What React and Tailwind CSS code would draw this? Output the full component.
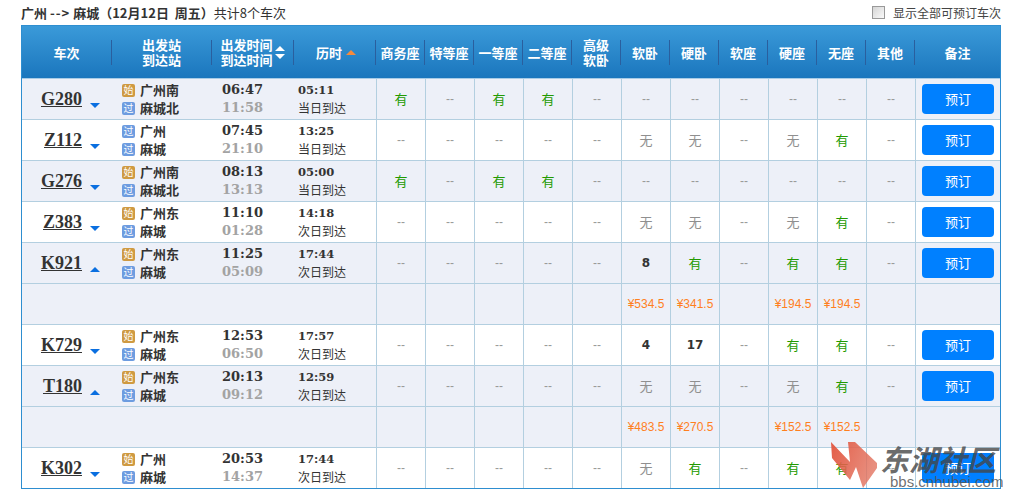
import React from 'react';

const seatHeads = ['商务座', '特等座', '一等座', '二等座', '高级软卧', '软卧', '硬卧', '软座', '硬座', '无座', '其他'];

const cn = '[font-family:"Noto_Sans_CJK_SC",sans-serif]';

const trains = [
  { no: 'G280', up: false, s1: ['始', '广州南'], s2: ['过', '麻城北'], t1: '06:47', t2: '11:58', dur: '05:11', day: '当日到达', seats: ['有', '--', '有', '有', '--', '--', '--', '--', '--', '--', '--'] },
  { no: 'Z112', up: false, s1: ['过', '广州'], s2: ['过', '麻城'], t1: '07:45', t2: '21:10', dur: '13:25', day: '当日到达', seats: ['--', '--', '--', '--', '--', '无', '无', '--', '无', '有', '--'] },
  { no: 'G276', up: false, s1: ['始', '广州南'], s2: ['过', '麻城北'], t1: '08:13', t2: '13:13', dur: '05:00', day: '当日到达', seats: ['有', '--', '有', '有', '--', '--', '--', '--', '--', '--', '--'] },
  { no: 'Z383', up: false, s1: ['始', '广州东'], s2: ['过', '麻城'], t1: '11:10', t2: '01:28', dur: '14:18', day: '次日到达', seats: ['--', '--', '--', '--', '--', '无', '无', '--', '无', '有', '--'] },
  { no: 'K921', up: true, s1: ['始', '广州东'], s2: ['过', '麻城'], t1: '11:25', t2: '05:09', dur: '17:44', day: '次日到达', seats: ['--', '--', '--', '--', '--', '8', '有', '--', '有', '有', '--'], prices: ['', '', '', '', '', '¥534.5', '¥341.5', '', '¥194.5', '¥194.5', ''] },
  { no: 'K729', up: false, s1: ['始', '广州东'], s2: ['过', '麻城'], t1: '12:53', t2: '06:50', dur: '17:57', day: '次日到达', seats: ['--', '--', '--', '--', '--', '4', '17', '--', '有', '有', '--'] },
  { no: 'T180', up: true, s1: ['始', '广州东'], s2: ['过', '麻城'], t1: '20:13', t2: '09:12', dur: '12:59', day: '次日到达', seats: ['--', '--', '--', '--', '--', '无', '无', '--', '无', '有', '--'], prices: ['', '', '', '', '', '¥483.5', '¥270.5', '', '¥152.5', '¥152.5', ''] },
  { no: 'K302', up: false, s1: ['始', '广州'], s2: ['过', '麻城'], t1: '20:53', t2: '14:37', dur: '17:44', day: '次日到达', seats: ['--', '--', '--', '--', '--', '无', '有', '--', '有', '有', '--'] },
];

const Tri = ({ up, color = 'border-[#0a6fe0]', className = '' }) => (
  <span
    className={`inline-block h-0 w-0 border-x-[5px] border-x-transparent ${up ? `border-b-[5px] ${color}` : `border-t-[5px] ${color}`} ${className}`}
  />
);

const Seat = ({ v }) => {
  if (v === '有') return <span className="text-[13px] text-[#229a00]">有</span>;
  if (v === '无') return <span className="text-[13px] text-[#8f8f8f]">无</span>;
  if (v === '--') return <span className="text-[12px] text-[#999] [font-family:'Liberation_Sans',sans-serif]">--</span>;
  return <span className="text-[12px] font-bold text-[#333] [font-family:'DejaVu_Sans',sans-serif]">{v}</span>;
};

const Station = ({ tag, name }) => (
  <div className="flex h-[18px] items-center gap-[5px]">
    <span className={`flex h-[13px] w-[13px] items-center justify-center rounded-[2px] text-[10px] leading-none text-white ${tag === '始' ? 'bg-[#cf9a42]' : 'bg-[#6d9ce0]'}`}>
      {tag}
    </span>
    <span className="text-[13px] font-bold text-[#333]">{name}</span>
  </div>
);

const Row = ({ t, striped }) => (
  <div className={`flex h-[41px] border-b border-[#b3cfe0] last:border-b-[#2e8ed0] ${striped ? 'bg-[#edf0f8]' : 'bg-white'}`}>
    <div className="flex w-[90px] shrink-0 items-center justify-end pr-3">
      <span className="text-[18px] leading-none font-bold text-[#333] underline [font-family:'Liberation_Serif',serif]">{t.no}</span>
      <Tri up={t.up} className="mt-[12px] ml-2" />
    </div>
    <div className="flex w-[99px] shrink-0 flex-col justify-center pl-2.5">
      <Station tag={t.s1[0]} name={t.s1[1]} />
      <Station tag={t.s2[0]} name={t.s2[1]} />
    </div>
    <div className="flex w-[82px] shrink-0 flex-col justify-center pl-[11px] text-[13px] leading-[18px] font-bold [font-family:'DejaVu_Serif',serif]">
      <span className="text-[#333]">{t.t1}</span>
      <span className="text-[#a3a3a3]">{t.t2}</span>
    </div>
    <div className="flex w-[83px] shrink-0 flex-col justify-center pl-[5px] text-[#333]">
      <span className="text-[11.5px] leading-[18px] font-bold [font-family:'DejaVu_Serif',serif]">{t.dur}</span>
      <span className="text-[12px] leading-[18px]">{t.day}</span>
    </div>
    {t.seats.map((s, i) => (
      <div key={i} className="flex w-[49px] shrink-0 items-center justify-center border-l border-[#b3cfe0]">
        <Seat v={s} />
      </div>
    ))}
    <div className="flex flex-1 items-center justify-center border-l border-[#b3cfe0]">
      <button className="h-[30px] w-[72px] rounded-[4px] bg-[#0080ff] text-[13px] text-white">预订</button>
    </div>
  </div>
);

const PriceRow = ({ prices }) => (
  <div className="flex h-[41px] border-b border-[#b3cfe0] bg-[#edf0f8]">
    <div className="w-[354px] shrink-0" />
    {prices.map((p, i) => (
      <div key={i} className="flex w-[49px] shrink-0 items-center justify-center border-l border-[#b3cfe0] text-[12px] text-[#ff7f1e] [font-family:'Liberation_Sans',sans-serif]">
        {p}
      </div>
    ))}
    <div className="flex-1 border-l border-[#b3cfe0]" />
  </div>
);

const HeadCell = ({ className = '', children, last }) => (
  <div className={`flex h-[25px] shrink-0 items-center justify-center text-center text-[13px] leading-[15px] font-bold text-white ${last ? '' : 'border-r border-[#2a5f9e]'} ${className}`}>
    {children}
  </div>
);

export default function App() {
  return (
    <div className={`relative h-[496px] w-[1011px] overflow-hidden bg-white ${cn}`}>
      <div className="flex h-[25px] items-center justify-between pr-[10px] pl-[21px] text-[13px] text-[#333]">
        <div className="whitespace-nowrap">
          <span className="font-bold">广州 <span className="tracking-[1px]">--&gt;</span> 麻城（12月12日&nbsp;&nbsp;周五）</span>
          <span>共计8个车次</span>
        </div>
        <label className="flex items-center gap-2 text-[12px] text-[#444]">
          <span className="h-[13px] w-[13px] border border-[#999] bg-gradient-to-br from-[#d5d5d5] to-[#fafafa]" />
          显示全部可预订车次
        </label>
      </div>

      <div className="mx-[21px] w-[980px] border-x border-[#2e8ed0]">
        <div className="flex h-[54px] items-center border-t border-[#2e8ed0] border-b border-b-[#a8cce6] bg-gradient-to-b from-[#3a9ad9] to-[#1a76bd]">
          <HeadCell className="w-[90px]">车次</HeadCell>
          <HeadCell className="w-[100px]"><span>出发站<br />到达站</span></HeadCell>
          <HeadCell className="w-[82px] gap-[2px]">
            <span>出发时间<br />到达时间</span>
            <span className="flex flex-col gap-[3px]">
              <Tri up color="border-white" />
              <Tri color="border-white" />
            </span>
          </HeadCell>
          <HeadCell className="w-[82px] gap-1 pl-[3px]">
            历时
            <Tri up color="border-[#f58a3c]" />
          </HeadCell>
          {seatHeads.map((h) => (
            <HeadCell key={h} className="w-[49px]">
              {h === '高级软卧' ? <span>高级<br />软卧</span> : h}
            </HeadCell>
          ))}
          <HeadCell last className="flex-1">备注</HeadCell>
        </div>
        <div>
          {trains.map((t, i) => (
            <React.Fragment key={t.no}>
              <Row t={t} striped={i % 2 === 0} />
              {t.prices && <PriceRow prices={t.prices} />}
            </React.Fragment>
          ))}
        </div>
      </div>

      {/* bbs watermark */}
      <div className="pointer-events-none absolute top-[442px] left-[830px] flex">
        <svg width="50" height="48" viewBox="0 0 50 48">
          <defs>
            <linearGradient id="wm" x1="0" y1="0" x2="1" y2="0.4">
              <stop offset="0" stopColor="#e2533c" stopOpacity="0.95" />
              <stop offset="1" stopColor="#e2735f" stopOpacity="0.8" />
            </linearGradient>
          </defs>
          <path d="M1 0 L20 20 L18 0 L25 0 L47 21 L47 26 L33 46 L26 25 L20 38 L2 16 Z" fill="url(#wm)" />
        </svg>
        <div className="flex flex-col">
          <span className="-mt-[1px] text-[29px] leading-[35px] font-bold whitespace-nowrap text-[#444]/80 italic">东湖社区</span>
          <span className="pl-[10px] text-[15px] leading-[12px] whitespace-nowrap text-[#555]/85 [font-family:'Liberation_Sans',sans-serif]">bbs.cnhubei.com</span>
        </div>
      </div>
    </div>
  );
}
